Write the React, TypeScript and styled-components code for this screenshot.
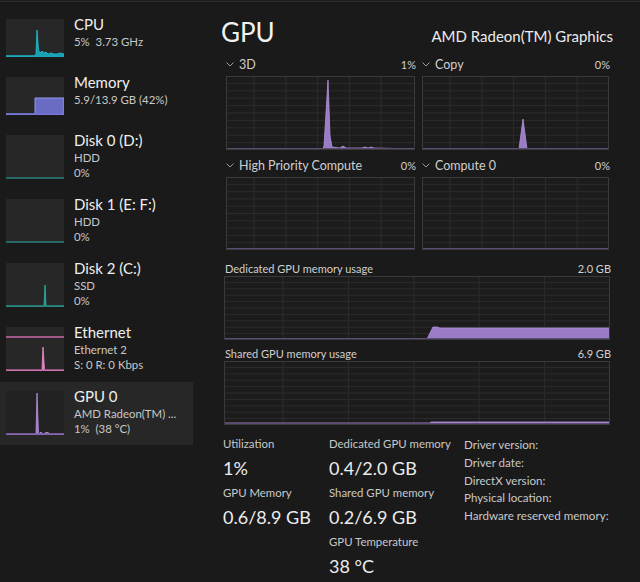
import React from "react";
import styled, { createGlobalStyle } from "styled-components";

const FONT = `"Segoe UI", Lato, "Open Sans", sans-serif`;

const Global = createGlobalStyle`
  html, body { margin: 0; padding: 0; background: #1b1b1b; }
  body { font-family: ${FONT}; color: #e6e6e6; }
`;

const Root = styled.div`
  width: 640px;
  height: 582px;
  box-sizing: border-box;
  border-top: 1px solid #1d1d1d;
  display: flex;
  background: #1a1a1a;
  position: relative;
  overflow: hidden;
  &::before {
    content: "";
    position: absolute;
    left: 0; right: 0; top: 0;
    height: 1px;
    background: #2c2c2c;
  }
`;

const Sidebar = styled.div`
  width: 194px;
  flex: none;
  padding-top: 9px;
  display: flex;
  flex-direction: column;
`;

const Item = styled.div<{ $sel?: boolean; $short?: boolean }>`
  display: flex;
  align-items: flex-start;
  gap: 10px;
  padding: 5px 6px 0 6px;
  height: ${(p) => (p.$short ? 58 : p.$sel ? 63 : 64)}px;
  width: 193px;
  box-sizing: border-box;
  background: ${(p) => (p.$sel ? "#272727" : "transparent")};
`;

const Thumb = styled.div<{ $h: number; $sel?: boolean }>`
  width: 58px;
  height: ${(p) => p.$h}px;
  margin-top: 4px;
  flex: none;
  background: ${(p) => (p.$sel ? "#222222" : "#272727")};
  svg { display: block; }
`;

const ItemText = styled.div`
  display: flex;
  flex-direction: column;
  min-width: 0;
`;

const ItemTitle = styled.div`
  font-size: 15px;
  line-height: 19px;
  color: #efefef;
  white-space: nowrap;
`;

const ItemSub = styled.div`
  font-size: 11.4px;
  line-height: 15px;
  color: #c8c8c8;
  white-space: pre;
`;

const Main = styled.div`
  flex: 1;
  min-width: 0;
  padding: 0 29px 0 30px;
  display: flex;
  flex-direction: column;
`;

const Header = styled.div`
  height: 54px;
  display: flex;
  justify-content: space-between;
  align-items: baseline;
  padding-top: 16px;
  box-sizing: border-box;
  margin-left: -3px;
  margin-right: -2px;
`;

const Title = styled.div`
  font-size: 26px;
  line-height: 30px;
  color: #f2f2f2;
`;

const Device = styled.div`
  font-size: 15px;
  color: #ececec;
`;

const Grid4 = styled.div`
  display: grid;
  grid-template-columns: 189px 187px;
  column-gap: 7px;
  row-gap: 5px;
  padding-left: 2px;
`;

const Cell = styled.div`
  display: flex;
  flex-direction: column;
  gap: 2px;
`;

const LabelRow = styled.div`
  height: 20px;
  display: flex;
  align-items: center;
  justify-content: space-between;
  font-size: 12.5px;
  color: #cfcfcf;
`;

const LabelLeft = styled.div`
  display: flex;
  align-items: center;
  gap: 5px;
  svg { display: block; }
`;

const Pct = styled.span`
  font-size: 11px;
  color: #d0d0d0;
  margin-right: -1px;
`;

const MemBlock = styled.div`
  display: flex;
  flex-direction: column;
  margin-top: 10px;
`;

const MemLabel = styled.div<{ $gap?: number }>`
  height: 16px;
  margin-top: ${(p) => p.$gap ?? 0}px;
  display: flex;
  align-items: center;
  justify-content: space-between;
  font-size: 11px;
  color: #d0d0d0;
  margin-left: 1px;
`;

const ChartBox = styled.div`
  svg { display: block; }
`;

const Stats = styled.div`
  display: grid;
  grid-template-columns: 106px 135px 1fr;
  margin-top: 11px;
  margin-left: -1px;
`;

const StatCol = styled.div`
  display: flex;
  flex-direction: column;
  gap: 1px;
`;

const Stat = styled.div`
  display: flex;
  flex-direction: column;
`;

const StatLabel = styled.div`
  font-size: 11.4px;
  line-height: 16px;
  color: #c8c8c8;
  white-space: nowrap;
`;

const StatValue = styled.div`
  font-size: 18px;
  line-height: 32px;
  color: #ececec;
  white-space: nowrap;
`;

const InfoCol = styled.div`
  display: flex;
  flex-direction: column;
`;

const InfoLine = styled.div`
  font-size: 11.6px;
  line-height: 17.75px;
  color: #c8c8c8;
  white-space: nowrap;
`;

const Chevron = () => (
  <svg width="8" height="5" viewBox="0 0 8 5">
    <polyline points="0.5,0.5 4,4 7.5,0.5" fill="none" stroke="#9a9a9a" strokeWidth="1" />
  </svg>
);

type ChartProps = {
  w: number;
  h: number;
  offset: number;
  step: number;
  rows: number;
  fill?: string;
};

const Chart: React.FC<ChartProps> = ({ w, h, offset, step, rows, fill }) => {
  const vlines: number[] = [];
  for (let x = offset; x < w - 2; x += step) vlines.push(x);
  const hlines: number[] = [];
  for (let i = 1; i < rows; i++) hlines.push((h * i) / rows);
  return (
    <svg width={w} height={h} viewBox={`0 0 ${w} ${h}`}>
      <rect x="0" y="0" width={w} height={h} fill="#1c1c1c" />
      {hlines.map((y, i) => (
        <line key={"h" + i} x1="0" x2={w} y1={y} y2={y} stroke="#2c2c2c" strokeWidth="1" />
      ))}
      {vlines.map((x, i) => (
        <line key={"v" + i} x1={x} x2={x} y1="0" y2={h} stroke="#2c2c2c" strokeWidth="1" />
      ))}
      {fill && <path d={fill} fill="#9a7cc6" stroke="#b194db" strokeWidth="0.8" />}
      <line x1="0" x2={w} y1={h - 1} y2={h - 1} stroke="#5e4c78" strokeWidth="2" />
      <rect x="0.5" y="0.5" width={w - 1} height={h - 1} fill="none" stroke="#3a3a3a" strokeWidth="1" />
    </svg>
  );
};

const Thumbnail: React.FC<{ h: number; kind: string; sel?: boolean }> = ({ h, kind, sel }) => {
  const b = h - 1;
  let content: React.ReactNode = null;
  if (kind === "cpu") {
    content = (
      <>
        <path
          d={`M0 ${b} L29 ${b} L30 ${b - 2} L31 11 L32.5 ${b - 6} L34 ${b - 3} L36 ${b - 5} L38 ${b - 3} L40 ${b - 4} L42 ${b - 2} L45 ${b - 3} L48 ${b - 2} L51 ${b - 2} L54 ${b - 3} L58 ${b - 2} L58 ${h} L0 ${h} Z`}
          fill="#179fb0"
          stroke="#22c0d4"
          strokeWidth="0.8"
        />
        <line x1="0" x2="58" y1={b} y2={b} stroke="#1aa6b8" strokeWidth="1.5" />
      </>
    );
  } else if (kind === "mem") {
    content = (
      <>
        <path d={`M0 ${b} L29 ${b} L29 21 L58 21 L58 ${h} L0 ${h} Z`} fill="#6a6cc4" stroke="#9296ea" strokeWidth="1" />
        <line x1="0" x2="58" y1={b} y2={b} stroke="#7073d0" strokeWidth="1.5" />
      </>
    );
  } else if (kind === "disk") {
    content = <line x1="0" x2="58" y1={b} y2={b} stroke="#2b7f7a" strokeWidth="1.5" />;
  } else if (kind === "disk2") {
    content = (
      <>
        <path d={`M0 ${b} L38 ${b} L39 22 L40 ${b} L58 ${b} L58 ${h} L0 ${h} Z`} fill="#239a90" stroke="#2bb3a8" strokeWidth="0.8" />
        <line x1="0" x2="58" y1={b} y2={b} stroke="#2b7f7a" strokeWidth="1.5" />
      </>
    );
  } else if (kind === "eth") {
    content = (
      <>
        <line x1="0" x2="58" y1="10" y2="10" stroke="#c86aa8" strokeWidth="1.5" />
        <path d={`M0 ${b} L36 ${b} L37 20 L38.5 ${b} L58 ${b} L58 ${h} L0 ${h} Z`} fill="#e07cc0" stroke="#f090d0" strokeWidth="0.8" />
        <line x1="0" x2="58" y1={b} y2={b} stroke="#a8588e" strokeWidth="1.5" strokeDasharray="1.5 1" />
      </>
    );
  } else if (kind === "gpu") {
    content = (
      <>
        <path
          d={`M0 ${b} L30 ${b} L31 2 L32.5 ${b} L35 ${b - 2} L37 ${b} L40 ${b - 1.5} L42 ${b - 1.5} L44 ${b} L58 ${b} L58 ${h} L0 ${h} Z`}
          fill="#a07ccc"
          stroke="#b692e0"
          strokeWidth="0.8"
        />
        <line x1="0" x2="58" y1={b} y2={b} stroke="#7a5ea2" strokeWidth="1.5" />
      </>
    );
  }
  return (
    <Thumb $h={h} $sel={sel}>
      <svg width="58" height={h} viewBox={`0 0 58 ${h}`}>
        {content}
      </svg>
    </Thumb>
  );
};

const items = [
  { title: "CPU", subs: ["5%  3.73 GHz"], h: 38, kind: "cpu" },
  { title: "Memory", subs: ["5.9/13.9 GB (42%)"], h: 38, kind: "mem" },
  { title: "Disk 0 (D:)", subs: ["HDD", "0%"], h: 44, kind: "disk" },
  { title: "Disk 1 (E: F:)", subs: ["HDD", "0%"], h: 44, kind: "disk" },
  { title: "Disk 2 (C:)", subs: ["SSD", "0%"], h: 44, kind: "disk2" },
  { title: "Ethernet", subs: ["Ethernet 2", "S: 0 R: 0 Kbps"], h: 44, kind: "eth" },
  { title: "GPU 0", subs: ["AMD Radeon(TM) ...", "1%  (38 °C)"], h: 44, kind: "gpu", sel: true },
];

const fill3D = "M0 73 L97 73 L98 70 L102 4 L104 60 L106 71 L114 72 L117 70 L120 72 L136 72 L139 71 L142 72 L145 71 L148 72 L189 73 Z";
const fillCopy = "M0 73 L97 73 L101 43 L105 73 L187 73 Z";
const fillDed = "M0 63 L203 63 L209 51 L213 51 L216 52 L386 52 L386 64 L0 64 Z";
const fillShared = "M0 62 L206 62 L207 61 L386 61 L386 64 L0 64 Z";

export default function App() {
  return (
    <>
      <Global />
      <Root>
        <Sidebar>
          {items.map((it) => (
            <Item key={it.title} $sel={it.sel} $short={it.h === 38}>
              <Thumbnail h={it.h} kind={it.kind} sel={it.sel} />
              <ItemText>
                <ItemTitle>{it.title}</ItemTitle>
                {it.subs.map((s) => (
                  <ItemSub key={s}>{s}</ItemSub>
                ))}
              </ItemText>
            </Item>
          ))}
        </Sidebar>
        <Main>
          <Header>
            <Title>GPU</Title>
            <Device>AMD Radeon(TM) Graphics</Device>
          </Header>
          <Grid4>
            <Cell>
              <LabelRow>
                <LabelLeft><Chevron />3D</LabelLeft>
                <Pct>1%</Pct>
              </LabelRow>
              <ChartBox><Chart w={189} h={74} offset={28} step={31.8} rows={10} fill={fill3D} /></ChartBox>
            </Cell>
            <Cell>
              <LabelRow>
                <LabelLeft><Chevron />Copy</LabelLeft>
                <Pct>0%</Pct>
              </LabelRow>
              <ChartBox><Chart w={187} h={74} offset={28} step={31.8} rows={10} fill={fillCopy} /></ChartBox>
            </Cell>
            <Cell>
              <LabelRow>
                <LabelLeft><Chevron />High Priority Compute</LabelLeft>
                <Pct>0%</Pct>
              </LabelRow>
              <ChartBox><Chart w={189} h={73} offset={28} step={31.8} rows={10} /></ChartBox>
            </Cell>
            <Cell>
              <LabelRow>
                <LabelLeft><Chevron />Compute 0</LabelLeft>
                <Pct>0%</Pct>
              </LabelRow>
              <ChartBox><Chart w={187} h={73} offset={28} step={31.8} rows={10} /></ChartBox>
            </Cell>
          </Grid4>
          <MemBlock>
            <MemLabel><span>Dedicated GPU memory usage</span><span>2.0 GB</span></MemLabel>
            <ChartBox><Chart w={386} h={64} offset={59} step={65.4} rows={10} fill={fillDed} /></ChartBox>
            <MemLabel $gap={5}><span>Shared GPU memory usage</span><span>6.9 GB</span></MemLabel>
            <ChartBox><Chart w={386} h={64} offset={59} step={65.4} rows={10} fill={fillShared} /></ChartBox>
          </MemBlock>
          <Stats>
            <StatCol>
              <Stat><StatLabel>Utilization</StatLabel><StatValue>1%</StatValue></Stat>
              <Stat><StatLabel>GPU Memory</StatLabel><StatValue>0.6/8.9 GB</StatValue></Stat>
            </StatCol>
            <StatCol>
              <Stat><StatLabel>Dedicated GPU memory</StatLabel><StatValue>0.4/2.0 GB</StatValue></Stat>
              <Stat><StatLabel>Shared GPU memory</StatLabel><StatValue>0.2/6.9 GB</StatValue></Stat>
              <Stat><StatLabel>GPU Temperature</StatLabel><StatValue>38 °C</StatValue></Stat>
            </StatCol>
            <InfoCol>
              <InfoLine>Driver version:</InfoLine>
              <InfoLine>Driver date:</InfoLine>
              <InfoLine>DirectX version:</InfoLine>
              <InfoLine>Physical location:</InfoLine>
              <InfoLine>Hardware reserved memory:</InfoLine>
            </InfoCol>
          </Stats>
        </Main>
      </Root>
    </>
  );
}
